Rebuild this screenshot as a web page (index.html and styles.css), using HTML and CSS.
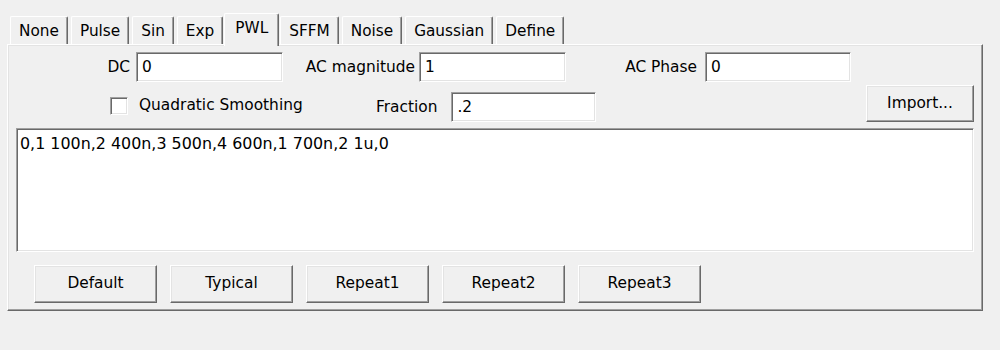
FILE: index.html
```html
<!DOCTYPE html>
<html>
<head>
<meta charset="utf-8">
<link rel="stylesheet" href="styles.css">
</head>
<body>
<div class="window">
  <div class="tabs">
    <div class="tab">None</div>
    <div class="tab">Pulse</div>
    <div class="tab">Sin</div>
    <div class="tab">Exp</div>
    <div class="tab active">PWL</div>
    <div class="tab">SFFM</div>
    <div class="tab">Noise</div>
    <div class="tab">Gaussian</div>
    <div class="tab">Define</div>
  </div>
  <div class="panel">
    <div class="row row1">
      <label class="lbl lbl-dc">DC</label>
      <div class="field f-dc">0</div>
      <label class="lbl lbl-acm">AC magnitude</label>
      <div class="field f-acm">1</div>
      <label class="lbl lbl-acp">AC Phase</label>
      <div class="field f-acp">0</div>
    </div>
    <div class="row row2">
      <span class="checkbox"></span>
      <span class="chk-label">Quadratic Smoothing</span>
      <label class="lbl-frac">Fraction</label>
      <div class="field f-frac">.2</div>
      <div class="spacer"></div>
      <div class="btn btn-import">Import...</div>
    </div>
    <div class="textarea">0,1 100n,2 400n,3 500n,4 600n,1 700n,2 1u,0</div>
    <div class="buttons">
      <div class="btn">Default</div>
      <div class="btn">Typical</div>
      <div class="btn">Repeat1</div>
      <div class="btn">Repeat2</div>
      <div class="btn">Repeat3</div>
    </div>
  </div>
</div>
</body>
</html>
```

FILE: styles.css
```css
html, body {
  margin: 0;
  padding: 0;
  background: #f0f0f0;
}
body {
  font-family: "DejaVu Sans", Verdana, sans-serif;
  font-size: 15.4px;
  color: #000;
}
.window {
  padding: 13px 0 0 7px;
  width: 976px;
}
.tabs {
  display: flex;
  align-items: flex-start;
  height: 33px;
  padding-left: 3px;
  position: relative;
  z-index: 2;
  font-size: 15.3px;
}
.tab {
  margin-top: 3px;
  margin-right: 3px;
  height: 28px;
  box-sizing: border-box;
  padding: 0 8px;
  line-height: 28px;
  background: #f0f0f0;
  border-top: 1px solid #ffffff;
  border-left: 1px solid #ffffff;
  border-right: 1px solid #696969;
  box-shadow: inset -1px 0 0 #a0a0a0;
  border-radius: 2px 2px 0 0;
}
.tab.active {
  margin: 0 1px 0 -2px;
  height: 33px;
  line-height: 28px;
  padding: 0 10px;
  position: relative;
  z-index: 3;
}
.panel {
  margin-top: -2px;
  box-sizing: border-box;
  width: 976px;
  border-top: 1px solid #ffffff;
  border-left: 1px solid #ffffff;
  border-right: 1px solid #696969;
  border-bottom: 1px solid #696969;
  box-shadow: inset -1px -1px 0 #a0a0a0, inset 1px 1px 0 #e3e3e3;
  padding: 7px 7px 7px 0;
  position: relative;
  z-index: 1;
}
.row {
  display: flex;
  align-items: center;
}
.row1 {
  height: 30px;
}
.lbl {
  text-align: right;
  white-space: nowrap;
}
.lbl-dc { width: 122px; margin-right: 6px; }
.lbl-acm { width: 132px; margin-right: 4px; }
.lbl-acp { width: 131px; margin-right: 8px; }
.field {
  box-sizing: border-box;
  height: 30px;
  background: #ffffff;
  border-top: 1px solid #a0a0a0;
  border-left: 1px solid #a0a0a0;
  border-right: 1px solid #ffffff;
  border-bottom: 1px solid #ffffff;
  box-shadow: inset 1px 1px 0 #696969, inset -1px -1px 0 #e3e3e3;
  padding: 0 5px;
  line-height: 29px;
}
.f-dc { width: 147px; }
.f-acm { width: 147px; }
.f-acp { width: 146px; }
.row2 {
  margin-top: 4px;
  height: 37px;
}
.checkbox {
  box-sizing: border-box;
  width: 18px;
  height: 18px;
  margin-left: 102px;
  margin-top: 2px;
  background: #ffffff;
  border-top: 1px solid #a0a0a0;
  border-left: 1px solid #a0a0a0;
  border-right: 1px solid #ffffff;
  border-bottom: 1px solid #ffffff;
  box-shadow: inset 1px 1px 0 #696969, inset -1px -1px 0 #e3e3e3;
}
.chk-label {
  margin-left: 11px;
  width: 237px;
  white-space: nowrap;
}
.lbl-frac {
  margin-top: 4px;
  margin-right: 14px;
}
.f-frac {
  width: 145px;
  margin-top: 4px;
}
.spacer {
  flex: 1;
}
.btn {
  box-sizing: border-box;
  height: 37px;
  background: #f0f0f0;
  border-top: 1px solid #ffffff;
  border-left: 1px solid #ffffff;
  border-right: 1px solid #696969;
  border-bottom: 1px solid #696969;
  box-shadow: inset -1px -1px 0 #a0a0a0, inset 1px 1px 0 #e3e3e3;
  text-align: center;
  line-height: 34px;
  white-space: nowrap;
}
.btn-import {
  width: 108px;
  margin-top: -2px;
  margin-right: 1px;
}
.textarea {
  margin: 5px 1px 0 8px;
  box-sizing: border-box;
  height: 124px;
  background: #ffffff;
  border-top: 1px solid #a0a0a0;
  border-left: 1px solid #a0a0a0;
  border-right: 1px solid #ffffff;
  border-bottom: 1px solid #ffffff;
  box-shadow: inset 1px 1px 0 #696969, inset -1px -1px 0 #e3e3e3;
  padding: 6px 3px;
  line-height: 18px;
  font-size: 15.9px;
}
.buttons {
  display: flex;
  gap: 13px;
  margin: 13px 0 0 26px;
}
.buttons .btn {
  width: 123px;
  height: 38px;
  line-height: 35px;
}
```
